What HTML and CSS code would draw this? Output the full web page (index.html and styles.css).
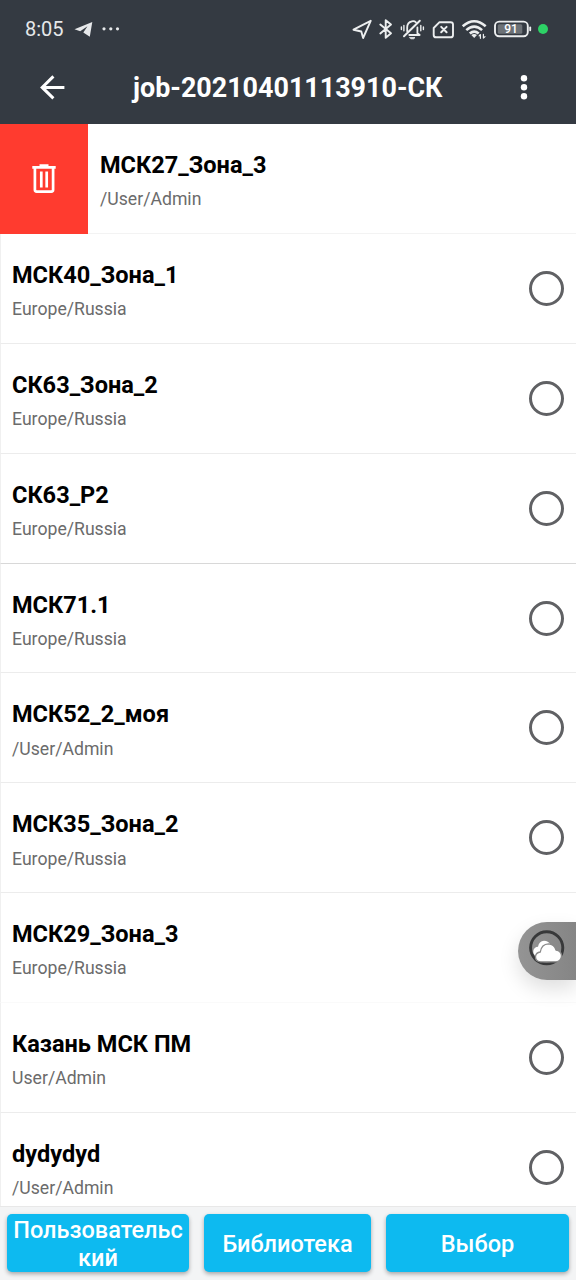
FILE: index.html
```html
<!DOCTYPE html>
<html lang="ru">
<head>
<meta charset="utf-8">
<title>job-20210401113910-СК</title>
<link rel="stylesheet" href="styles.css">
</head>
<body>
<div class="screen">
  <header class="header">
    <div class="status">
      <span class="clock">8:05</span>
      <svg class="status-left" width="48" height="20" viewBox="74 19 48 20">
        <path fill="#e6e8ea" d="M74.5 29.3 92.3 21.9 89.8 36.8 83.3 32.5 87.5 26.3 80.2 31.2Z"/>
        <g fill="#e6e8ea"><circle cx="104" cy="28.8" r="1.6"/><circle cx="110.8" cy="28.8" r="1.6"/><circle cx="117.5" cy="28.8" r="1.6"/></g>
      </svg>
      <svg class="status-right" width="200" height="28" viewBox="350 15 200 28" fill="none" stroke="#eceeef" stroke-width="1.9" stroke-linecap="round" stroke-linejoin="round">
        <path d="M353.5 29.7 370.7 20.8 363.1 38 361.3 31.5Z"/>
        <path d="M380.3 24.5 391 33.3 385.7 37.8V20.2L391 24.6 380.3 33.5"/>
        <path d="M407.2 31.2V27.3Q407.2 22.3 411.9 21.3 414.4 20.8 416 22.3M417.4 27.5V33.3L419.7 35H409.3" stroke-width="1.8"/>
        <path d="M404 36.3 419.8 20.8" stroke-width="2"/>
        <path d="M409.8 37.6h5.2l-1.4 1.2h-2.4Z" fill="#eceeef" stroke-width=".8"/>
        <path d="M403.9 25.4v5.4M401.4 27v2.6M420.8 25.4v5.4M423.4 27v2.6" stroke-width="1.4"/>
        <path d="M439.5 22.2H450.6Q453 22.2 453 24.6V34.9Q453 37.3 450.6 37.3H436.1Q433.7 37.3 433.7 34.9V28Z"/>
        <path d="M441.2 26.9 446.6 32.3M446.6 26.9 441.2 32.3" stroke-width="2"/>
        <g stroke-width="2.6" stroke-linecap="butt"><path d="M462.7 26.3Q474.2 16.2 485.7 26.3"/><path d="M466.3 30.1Q474.2 23.1 482.1 30.1"/><path d="M469.8 33.6Q474.2 29.8 478.7 33.6"/></g>
        <path d="M471.3 35.1Q474.2 33 477 35.1L474.2 38Z" fill="#eceeef" stroke="none"/>
        <path d="M480.4 38.3V34.5l-1.3 1.3M483.4 34.3v3.8l1.6-1.5" stroke-width="1.2"/>
        <rect x="495" y="21.6" width="32.8" height="14.6" rx="4.2"/>
        <rect x="497.8" y="24.2" width="24.5" height="9.5" rx="1.5" fill="#6c7176" stroke="none"/>
        <path d="M530.2 27.5v2.8" stroke-width="1.9"/>
        <text x="511" y="33.4" class="charge">91</text>
        <circle cx="543" cy="29" r="5" fill="#2dd266" stroke="none"/>
      </svg>
    </div>
    <div class="appbar">
      <svg class="back" width="26" height="26" viewBox="0 0 26 26" fill="none" stroke="#fff" stroke-width="3"><path d="M14.4 1.4 3.2 12.4 14.4 23.4M3.2 12.4H25.4"/></svg>
      <h1 class="title">job-20210401113910-СК</h1>
      <svg class="more" width="8" height="26" viewBox="0 0 8 26" fill="#fff"><circle cx="4" cy="3.2" r="3.2"/><circle cx="4" cy="12.2" r="3.2"/><circle cx="4" cy="21.2" r="3.2"/></svg>
    </div>
  </header>
  <main class="list">
    <div class="row swiped">
      <div class="delete">
        <svg width="26" height="32" viewBox="0 0 26 32" fill="none" stroke="#fff"><path d="M1.3 4.3H24.7M8.5 2.6H17.5" stroke-width="2.7"/><path d="M3.9 5V26.8Q3.9 28.6 5.7 28.6H20.3Q22.1 28.6 22.1 26.8V5" stroke-width="2.7"/><path d="M10.3 8.5V24.5M15.7 8.5V24.5" stroke-width="2.7"/></svg>
      </div>
      <div class="text"><div class="name">МСК27_Зона_3</div><div class="path">/User/Admin</div></div>
    </div>
    <div class="row"><div class="text"><div class="name">МСК40_Зона_1</div><div class="path">Europe/Russia</div></div><span class="radio"></span></div>
    <div class="row"><div class="text"><div class="name">СК63_Зона_2</div><div class="path">Europe/Russia</div></div><span class="radio"></span></div>
    <div class="row strong"><div class="text"><div class="name">СК63_Р2</div><div class="path">Europe/Russia</div></div><span class="radio"></span></div>
    <div class="row"><div class="text"><div class="name">МСК71.1</div><div class="path">Europe/Russia</div></div><span class="radio"></span></div>
    <div class="row"><div class="text"><div class="name">МСК52_2_моя</div><div class="path">/User/Admin</div></div><span class="radio"></span></div>
    <div class="row"><div class="text"><div class="name">МСК35_Зона_2</div><div class="path">Europe/Russia</div></div><span class="radio"></span></div>
    <div class="row faint"><div class="text"><div class="name">МСК29_Зона_3</div><div class="path">Europe/Russia</div></div><span class="radio"></span></div>
    <div class="row"><div class="text"><div class="name">Казань МСК ПМ</div><div class="path">User/Admin</div></div><span class="radio"></span></div>
    <div class="row"><div class="text"><div class="name">dydydyd</div><div class="path">/User/Admin</div></div><span class="radio"></span></div>
  </main>
  <footer class="footer">
    <button class="btn">Пользовательс<br>кий</button>
    <button class="btn">Библиотека</button>
    <button class="btn">Выбор</button>
  </footer>
  <div class="bubble">
    <svg width="58" height="58" viewBox="518 922 58 58">
      <circle cx="546.7" cy="947.8" r="16.1" fill="none" stroke="#38393a" stroke-width="2.9"/>
      <path fill="#fff" d="M536 956Q532.5 954 533.5 950 534.5 947 538 946.7 539 941 544 940.7 548.5 941 550 944L546 952Z"/>
      <path fill="#fff" stroke="#8a8a8a" stroke-width="1.3" d="M540.5 961.8Q535.3 961.2 535.5 956.5 536 952.4 540.3 952 541.5 944.2 548.5 943.9 554.3 944.2 556 950 561.4 950.8 561.5 956 561.2 961.2 556 961.8Z"/>
    </svg>
  </div>
</div>
</body>
</html>
```
FILE: styles.css
```css
* { box-sizing: border-box; }
body { margin: 0; font-family: Roboto, "Noto Sans", sans-serif; }
.screen { position: relative; width: 576px; height: 1280px; display: flex; flex-direction: column; overflow: hidden; background: #fff; }
.header { flex: none; height: 124px; background: #343a42; color: #fff; }
.status { height: 58px; display: flex; align-items: center; padding-left: 25px; }
.clock { width: 49px; font-size: 20px; line-height: 24px; color: #e6e8ea; }
.status-right { margin-left: auto; margin-right: 26px; }
.charge { font: 500 12px Roboto, sans-serif; fill: #fff; stroke: none; text-anchor: middle; }
.appbar { height: 60px; display: grid; grid-template-columns: 26px 1fr 8px; align-items: center; padding: 0 48px 0 39px; }
.title { margin: 0 0 0 68px; font-size: 26.9px; font-weight: 700; line-height: 32px; white-space: nowrap; }
.list { flex: 1; min-height: 0; overflow: hidden; }
.row { height: 109.9px; display: flex; align-items: stretch; justify-content: space-between; padding: 0 12px 0 11px; border-left: 1px solid #f0f0f0; border-bottom: 1px solid #ececec; }
.row.strong { border-bottom-color: #d8d8d8; }
.row.faint { border-bottom-color: #fafafa; }
.row.swiped { justify-content: flex-start; padding: 0; border-left: 0; border-bottom-color: #f3f3f3; }
.delete { width: 88px; height: 110px; margin-right: 12px; background: #ff3b2f; display: flex; align-items: center; justify-content: center; }
.text { padding-top: 26px; }
.name { font-size: 23.55px; font-weight: 700; line-height: 30px; color: #000; white-space: nowrap; }
.path { margin-top: 8.2px; font-size: 17.65px; line-height: 22px; color: #6b6b6b; white-space: nowrap; }
.radio { align-self: center; width: 35px; height: 35px; border: 3px solid #606164; border-radius: 50%; }
.footer { flex: none; height: 74px; padding: 7px 7px 8px; border-top: 1px solid #e8e8e8; background: #f3f4f5; display: grid; grid-template-columns: 182px 167px 183px; column-gap: 15px; }
.btn { height: 58px; margin: 0; padding: 3px 0 0; border: 0; border-radius: 5px; background: #0dbaf0; color: #fff; font: 500 23.5px/27.5px Roboto, "Noto Sans", sans-serif; white-space: nowrap; box-shadow: 0 2px 4px rgba(0,0,0,.32); }
.bubble { position: absolute; right: 0; top: 922px; width: 58px; height: 58px; border-radius: 29px 0 0 29px; background: linear-gradient(90deg, #949494, #858585); box-shadow: 0 9px 20px rgba(0,0,0,.13); }
.bubble svg { display: block; }
```
